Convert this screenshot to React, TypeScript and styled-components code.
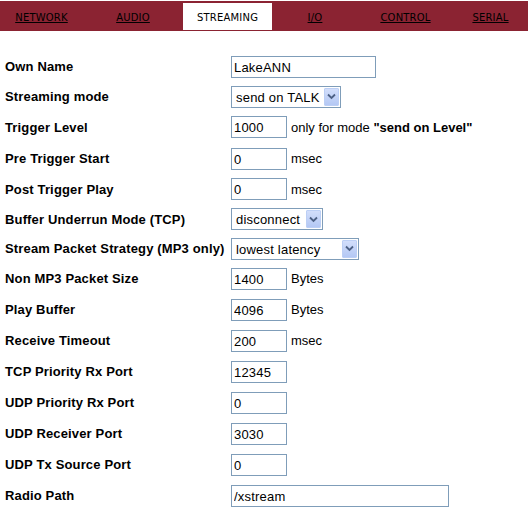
import styled, { createGlobalStyle } from 'styled-components';

const GlobalStyle = createGlobalStyle`
  html, body {
    margin: 0;
    padding: 0;
    background: #fff;
  }
  body {
    font-family: "Liberation Sans", Arial, sans-serif;
    color: #000;
  }
`

const NavBar = styled.nav`
  display: flex;
  height: 30px;
  margin-top: 1px;
  background: #8b2332;
  box-sizing: border-box;
  padding: 2px 0 1px 0;
`

const NavTab = styled.a<{ $w: number; $active?: boolean }>`
  width: ${p => p.$w}px;
  display: flex;
  align-items: center;
  justify-content: center;
  font-family: "DejaVu Sans", Verdana, sans-serif;
  font-size: 10px;
  letter-spacing: 0.2px;
  color: #000;
  text-decoration: ${p => (p.$active ? 'none' : 'underline')};
  background: ${p => (p.$active ? '#fff' : 'transparent')};
  cursor: pointer;
  padding-top: 1px;
  box-sizing: border-box;
`

const Form = styled.div`
  padding: 20px 0 0 5px;
  display: flex;
  flex-direction: column;
`

const Row = styled.div<{ $h: number }>`
  display: grid;
  grid-template-columns: 226px 1fr;
  align-items: center;
  height: ${p => p.$h}px;
`

const Label = styled.div`
  font-weight: bold;
  font-size: 13px;
  letter-spacing: 0.15px;
  white-space: nowrap;
`

const Field = styled.div`
  display: flex;
  align-items: center;
  gap: 4px;
  font-size: 13px;
`

const TextInput = styled.input<{ $w: number }>`
  width: ${p => p.$w}px;
  height: 22px;
  box-sizing: border-box;
  border: 1px solid #7f9db9;
  padding: 1px 2px 0 2px;
  font-family: "Liberation Sans", Arial, sans-serif;
  font-size: 13px;
  letter-spacing: 0.2px;
  color: #000;
  outline: none;
  margin: 0;
`

const SelectWrap = styled.div<{ $w: number }>`
  position: relative;
  width: ${p => p.$w}px;
  height: 22px;
`

const Select = styled.select`
  appearance: none;
  -webkit-appearance: none;
  width: 100%;
  height: 100%;
  box-sizing: border-box;
  border: 1px solid #7f9db9;
  border-radius: 0;
  background: #fff;
  padding: 1px 0 0 4px;
  font-family: "Liberation Sans", Arial, sans-serif;
  font-size: 13px;
  letter-spacing: 0.2px;
  color: #000;
  outline: none;
  margin: 0;
`

const DropButton = styled.span`
  position: absolute;
  top: 2px;
  right: 2px;
  width: 15px;
  height: 18px;
  box-sizing: border-box;
  border: 1px solid #bccff5;
  border-radius: 1px;
  background: linear-gradient(#d2defb, #b4c8f4);
  display: flex;
  align-items: center;
  justify-content: center;
  pointer-events: none;
`

const Note = styled.span`
  white-space: nowrap;
`

type Item =
  | { label: string; h: number; kind: 'text'; value: string; w: number; note?: React.ReactNode }
  | { label: string; h: number; kind: 'select'; value: string; w: number; options: string[] }

const items: Item[] = [
  { label: 'Own Name', h: 31, kind: 'text', value: 'LakeANN', w: 145 },
  { label: 'Streaming mode', h: 29, kind: 'select', value: 'send on TALK', w: 110, options: ['send on TALK', 'send on Level', 'always'] },
  { label: 'Trigger Level', h: 32, kind: 'text', value: '1000', w: 56, note: <>only for mode <b>"send on Level"</b></> },
  { label: 'Pre Trigger Start', h: 31, kind: 'text', value: '0', w: 56, note: 'msec' },
  { label: 'Post Trigger Play', h: 30, kind: 'text', value: '0', w: 56, note: 'msec' },
  { label: 'Buffer Underrun Mode (TCP)', h: 30, kind: 'select', value: 'disconnect', w: 92, options: ['disconnect', 'wait'] },
  { label: 'Stream Packet Strategy (MP3 only)', h: 29, kind: 'select', value: 'lowest latency', w: 128, options: ['lowest latency', 'highest quality'] },
  { label: 'Non MP3 Packet Size', h: 31, kind: 'text', value: '1400', w: 56, note: 'Bytes' },
  { label: 'Play Buffer', h: 31, kind: 'text', value: '4096', w: 56, note: 'Bytes' },
  { label: 'Receive Timeout', h: 31, kind: 'text', value: '200', w: 56, note: 'msec' },
  { label: 'TCP Priority Rx Port', h: 31, kind: 'text', value: '12345', w: 56 },
  { label: 'UDP Priority Rx Port', h: 31, kind: 'text', value: '0', w: 56 },
  { label: 'UDP Receiver Port', h: 31, kind: 'text', value: '3030', w: 56 },
  { label: 'UDP Tx Source Port', h: 31, kind: 'text', value: '0', w: 56 },
  { label: 'Radio Path', h: 31, kind: 'text', value: '/xstream', w: 218 },
]

const tabs = [
  { name: 'NETWORK', w: 83 },
  { name: 'AUDIO', w: 100 },
  { name: 'STREAMING', w: 89, active: true },
  { name: 'I/O', w: 86 },
  { name: 'CONTROL', w: 95 },
  { name: 'SERIAL', w: 75 },
]

function Chevron() {
  return (
    <svg width="9" height="7" viewBox="0 0 9 7">
      <path d="M1 1.5 L4.5 5 L8 1.5" fill="none" stroke="#4d6185" strokeWidth="1.8" />
    </svg>
  )
}

export default function App() {
  return (
    <>
      <GlobalStyle />
      <NavBar>
        {tabs.map(t => (
          <NavTab key={t.name} $w={t.w} $active={t.active}>{t.name}</NavTab>
        ))}
      </NavBar>
      <Form>
        {items.map(it => (
          <Row key={it.label} $h={it.h}>
            <Label>{it.label}</Label>
            <Field>
              {it.kind === 'text' ? (
                <>
                  <TextInput $w={it.w} defaultValue={it.value} />
                  {it.note && <Note>{it.note}</Note>}
                </>
              ) : (
                <SelectWrap $w={it.w}>
                  <Select defaultValue={it.value}>
                    {it.options.map(o => <option key={o}>{o}</option>)}
                  </Select>
                  <DropButton><Chevron /></DropButton>
                </SelectWrap>
              )}
            </Field>
          </Row>
        ))}
      </Form>
    </>
  )
}
